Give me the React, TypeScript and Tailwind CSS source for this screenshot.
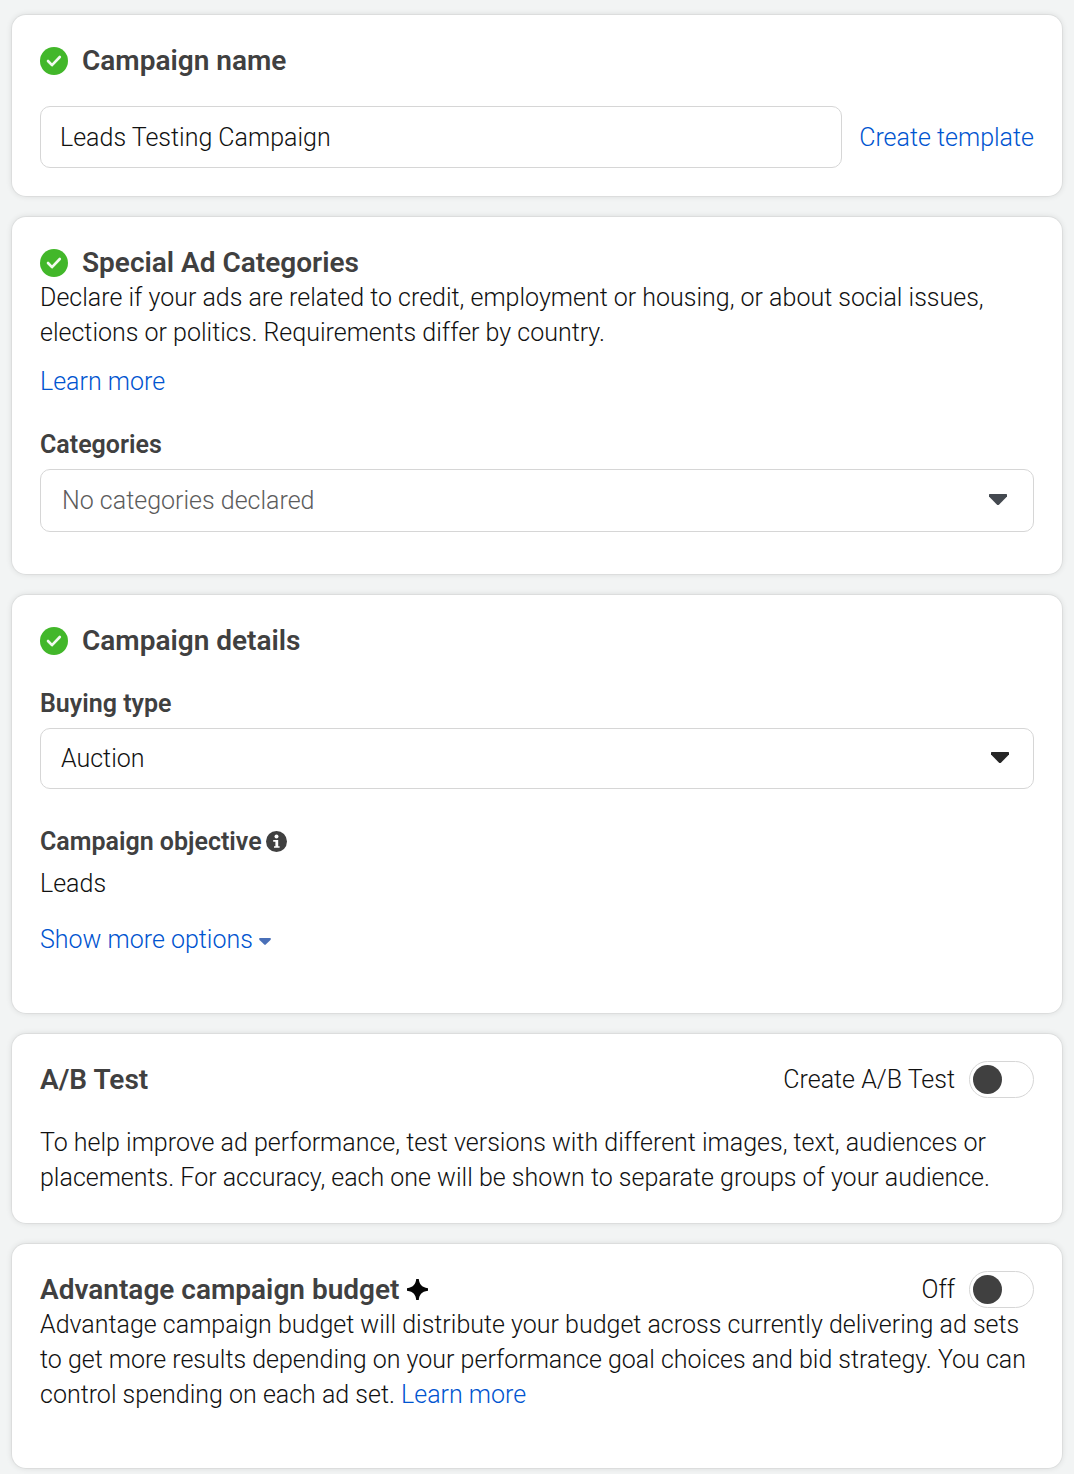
import { useState, type ReactNode } from "react";
import clsx from "clsx";

interface CardProps {
  children: ReactNode;
  className?: string;
}

function Card({ children, className }: CardProps) {
  return (
    <section
      className={clsx(
        "rounded-[14px] bg-white px-7 pt-7 shadow-[0_0_0_1px_rgba(0,0,0,0.04),0_0_6px_rgba(0,0,0,0.12)]",
        className
      )}
    >
      {children}
    </section>
  );
}

function CheckIcon() {
  return (
    <svg className="size-7 shrink-0" viewBox="0 0 28 28" aria-hidden="true">
      <circle cx="14" cy="14" r="14" fill="#42b72a" />
      <path
        d="M8 14l4 4.2 7.8-8.2"
        fill="none"
        stroke="#f3fbf1"
        strokeWidth="2.6"
        strokeLinecap="round"
        strokeLinejoin="round"
      />
    </svg>
  );
}

function InfoIcon() {
  return (
    <svg className="size-[21px] shrink-0" viewBox="0 0 21 21" aria-hidden="true">
      <circle cx="10.5" cy="10.5" r="10.5" fill="#404040" />
      <circle cx="10.5" cy="5.4" r="2" fill="#fff" />
      <path d="M7.2 9h5v6.2h1.4v1.6H8v-1.6h1.4v-4.4H7.2z" fill="#fff" />
    </svg>
  );
}

function SparkIcon() {
  return (
    <svg className="size-[21px] shrink-0" viewBox="0 0 21 21" aria-hidden="true">
      <path
        d="M9.2 0h2.6c.4 4.800 2.600 8.400 9.200 9.200v2.600c-6.600.8-8.800 4.400-9.200 9.200H9.200C8.800 16.200 6.600 12.600 0 11.800V9.200C6.600 8.400 8.800 4.800 9.200 0z"
        fill="#050505"
      />
    </svg>
  );
}

function Caret({ className }: { className?: string }) {
  return (
    <svg className={className} viewBox="0 0 18 11" aria-hidden="true">
      <path d="M.6 0h16.800q.6 0 .6.600v2L10.200 10.400q-1.200 1-2.400 0L0 2.600v-2Q0 0 .6 0z" fill="currentColor" />
    </svg>
  );
}

function Heading({ children, checked }: { children: ReactNode; checked?: boolean }) {
  return (
    <h2 className="flex items-center text-[28px] leading-[35px] font-semibold text-[#404040]">
      {checked && (
        <span className="mr-3.5">
          <CheckIcon />
        </span>
      )}
      {children}
    </h2>
  );
}

interface SelectFieldProps {
  id: string;
  label: string;
  option: string;
  selectClass: string;
  caretClass: string;
}

function SelectField({ id, label, option, selectClass, caretClass }: SelectFieldProps) {
  return (
    <div className="mt-7">
      <label htmlFor={id} className="block font-semibold text-[#404040]">
        {label}
      </label>
      <div className="relative mt-[7px]">
        <select
          id={id}
          className={clsx("block w-full appearance-none rounded-[10px] border border-[#d6d6d6] bg-white pr-16", selectClass)}
        >
          <option>{option}</option>
        </select>
        <Caret className={clsx("pointer-events-none absolute h-[11px] w-[18px]", caretClass)} />
      </div>
    </div>
  );
}

function Toggle({ id, label }: { id: string; label: string }) {
  const [on, setOn] = useState(false);

  return (
    <div className="flex h-[35px] items-center gap-3.5">
      <label htmlFor={id}>{label}</label>
      <input
        id={id}
        type="checkbox"
        role="switch"
        checked={on}
        onChange={(e) => setOn(e.target.checked)}
        className="h-[37px] w-[65px] cursor-pointer appearance-none rounded-full border border-[#d6d6d6] bg-white p-[3px] before:block before:size-[29px] before:rounded-full before:bg-[#404040] checked:before:ml-auto checked:before:bg-[#0a5fd0]"
      />
    </div>
  );
}

export default function App() {
  const [name, setName] = useState("Leads Testing Campaign");

  return (
    <main className="flex min-h-screen flex-col gap-[21px] bg-[#f2f4f4] px-3 pt-[15px] pb-1.5 font-[Roboto,sans-serif] text-[25px] leading-[35px] font-light text-[#111111]">
      <Card className="pb-7">
        <Heading checked>Campaign name</Heading>
        <div className="mt-7 flex items-center gap-[17px]">
          <input
            type="text"
            aria-label="Campaign name"
            value={name}
            onChange={(e) => setName(e.target.value)}
            className="h-[62px] min-w-0 flex-1 rounded-[10px] border border-[#d6d6d6] bg-white px-[19px]"
          />
          <a href="#template" className="text-[#0054d0]">
            Create template
          </a>
        </div>
      </Card>

      <Card className="pb-[42px]">
        <Heading checked>Special Ad Categories</Heading>
        <p>
          Declare if your ads are related to credit, employment or housing, or about social issues,
          elections or politics. Requirements differ by country.
        </p>
        <a href="#categories-help" className="mt-3.5 block w-fit text-[#0054d0]">
          Learn more
        </a>
        <SelectField
          id="categories"
          label="Categories"
          option="No categories declared"
          selectClass="h-[63px] pl-[21px] text-[#5c5c5c]"
          caretClass="top-[25px] right-[27px] text-[#444950]"
        />
      </Card>

      <Card className="pb-14">
        <Heading checked>Campaign details</Heading>
        <SelectField
          id="buying-type"
          label="Buying type"
          option="Auction"
          selectClass="h-[61px] pl-5"
          caretClass="top-6 right-[25px] text-[#262626]"
        />
        <h3 className="mt-[35px] flex items-center gap-1 font-semibold text-[#404040]">
          Campaign objective
          <InfoIcon />
        </h3>
        <p className="mt-[7px]">Leads</p>
        <button type="button" className="mt-[21px] flex cursor-pointer items-center gap-1.5 text-[#0054d0]">
          Show more options
          <Caret className="mt-[3px] h-[7px] w-3 text-[#4a70b8]" />
        </button>
      </Card>

      <Card className="pb-7">
        <div className="flex items-center justify-between">
          <Heading>A/B Test</Heading>
          <Toggle id="ab-test" label="Create A/B Test" />
        </div>
        <p className="mt-7">
          To help improve ad performance, test versions with different images, text, audiences or
          placements. For accuracy, each one will be shown to separate groups of your audience.
        </p>
      </Card>

      <Card className="pb-14">
        <div className="flex items-center justify-between">
          <Heading>
            <span className="mr-2">Advantage campaign budget</span>
            <SparkIcon />
          </Heading>
          <Toggle id="campaign-budget" label="Off" />
        </div>
        <p>
          Advantage campaign budget will distribute your budget across currently delivering ad sets
          to get more results depending on your performance goal choices and bid strategy. You can
          control spending on each ad set.{" "}
          <a href="#budget-help" className="text-[#0054d0]">
            Learn more
          </a>
        </p>
      </Card>
    </main>
  );
}
